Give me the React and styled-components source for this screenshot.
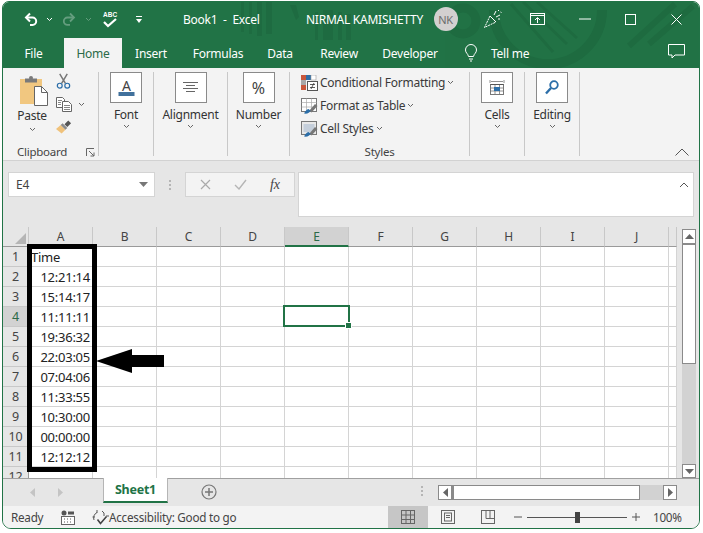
import React from "react";
import styled, { createGlobalStyle } from "styled-components";

const GREEN = "#217346";
const COLUMNS = ["A", "B", "C", "D", "E", "F", "G", "H", "I", "J"];
const TIMES = ["12:21:14", "15:14:17", "11:11:11", "19:36:32", "22:03:05", "07:04:06", "11:33:55", "10:30:00", "00:00:00", "12:12:12"];

const GlobalStyle = createGlobalStyle`
  html, body {
    margin: 0;
    padding: 0;
    background: #fff;
    overflow: hidden;
  }
  * {
    box-sizing: border-box;
  }
`;

const Window = styled.div`
  width: 698px;
  height: 528px;
  margin: 1px 0 0 2px;
  border: 1px solid ${GREEN};
  border-radius: 7px 7px 9px 9px;
  overflow: hidden;
  display: flex;
  flex-direction: column;
  font-family: "Noto Sans", "Open Sans", sans-serif;
  font-size: 12px;
  letter-spacing: -0.25px;
  color: #333;
  background: #f3f3f3;
`;

const Header = styled.div`
  position: relative;
  height: 66px;
  flex: none;
  background: ${GREEN};
  color: #fff;
`;

const Pattern = styled.svg`
  position: absolute;
  left: 0;
  top: 0;
`;

const TitleRow = styled.div`
  position: relative;
  height: 36px;
  padding-bottom: 2px;
  display: flex;
  align-items: center;
`;

const TitleSlot = styled.div`
  position: relative;
  flex: none;
  width: ${(p) => p.$w}px;
  display: flex;
  align-items: center;
  justify-content: center;
  opacity: ${(p) => p.$dim || 1};
`;

const TitleText = styled.div`
  flex: none;
  width: ${(p) => p.$w}px;
  padding-left: ${(p) => p.$pad || 0}px;
  font-size: 12px;
  white-space: pre;
`;

const Avatar = styled.div`
  width: 24px;
  height: 24px;
  border-radius: 50%;
  background: #d3d0d0;
  color: #6d6d6d;
  font-size: 11px;
  display: flex;
  align-items: center;
  justify-content: center;
`;

const TabRow = styled.div`
  position: relative;
  height: 30px;
  display: flex;
  align-items: stretch;
`;

const Tab = styled.div`
  flex: none;
  width: ${(p) => p.$w}px;
  display: flex;
  align-items: center;
  justify-content: center;
  font-size: 12px;
  background: ${(p) => (p.$active ? "#f3f3f3" : "transparent")};
  color: ${(p) => (p.$active ? "#2b6a47" : "#fff")};
`;

const TellMe = styled.div`
  flex: none;
  display: flex;
  align-items: center;
  gap: 13px;
  padding-left: 18px;
  font-size: 12px;
`;

const CommentSlot = styled.div`
  position: absolute;
  right: 14px;
  top: 6px;
`;

const Ribbon = styled.div`
  position: relative;
  height: 93px;
  flex: none;
  display: flex;
  background: #f3f3f3;
  border-bottom: 1px solid #d2d2d2;
  padding-top: 4px;
`;

const Group = styled.div`
  position: relative;
  flex: none;
  width: ${(p) => p.$w}px;
  height: 84px;
  border-right: 1px solid #c8c8c8;
  display: flex;
  flex-direction: column;
  align-items: center;
`;

const Collapsed = styled.div`
  width: 32px;
  height: 31px;
  background: #fff;
  border: 1px solid #8a8a8a;
  display: flex;
  align-items: center;
  justify-content: center;
  font-size: 16px;
  letter-spacing: 0;
  color: #444;
`;

const GroupName = styled.div`
  margin-top: 3px;
  font-size: 12px;
  line-height: 18px;
`;

const Chevron = styled.svg`
  display: block;
  flex: none;
`;

const GroupFoot = styled.div`
  position: absolute;
  left: 0;
  right: 0;
  top: 72px;
  text-align: center;
  font-size: 11.5px;
  line-height: 16px;
  color: #444;
`;

const ClipFoot = styled(GroupFoot)`
  display: flex;
  align-items: center;
  justify-content: space-between;
  padding: 0 3px 0 14px;
`;

const ClipBody = styled.div`
  display: flex;
  width: 100%;
  padding-left: 11px;
`;

const PasteCol = styled.div`
  width: 36px;
  padding-top: 4px;
  display: flex;
  flex-direction: column;
  align-items: center;
  font-size: 12px;
  line-height: 16px;
`;

const PasteLabel = styled.span`
  margin: 2px 0 3px;
`;

const ClipTools = styled.div`
  display: flex;
  flex-direction: column;
  gap: 5px;
  padding-left: 6px;
`;

const ClipTool = styled.div`
  display: flex;
  align-items: center;
  gap: 6px;
  height: 18px;
`;

const StyleList = styled.div`
  display: flex;
  flex-direction: column;
  width: 100%;
  padding: 0 0 0 11px;
  gap: 2px;
`;

const StyleItem = styled.div`
  height: 21px;
  display: flex;
  align-items: center;
  gap: 2px;
  font-size: 12px;
  color: #3a3a3a;
  white-space: nowrap;
`;

const CollapseArrow = styled.svg`
  position: absolute;
  right: 10px;
  bottom: 4px;
`;

const FormulaRow = styled.div`
  height: 66px;
  flex: none;
  background: #e6e6e6;
  display: flex;
  align-items: flex-start;
  padding: 11px 0 0 5px;
`;

const NameBox = styled.div`
  width: 147px;
  height: 25px;
  background: #fff;
  border: 1px solid #d4d4d4;
  display: flex;
  align-items: center;
  justify-content: space-between;
  padding: 0 6px 0 7px;
  font-size: 12px;
  color: #444;
`;

const Grip = styled.div`
  width: 30px;
  height: 25px;
  display: flex;
  align-items: center;
  justify-content: center;
`;

const GripDots = styled.div`
  width: 2px;
  height: ${(p) => p.$h}px;
  background: repeating-linear-gradient(#b5b5b5 0 2px, transparent 2px 4px);
`;

const FxBox = styled.div`
  width: 110px;
  height: 25px;
  background: #f3f3f3;
  border: 1px solid #d4d4d4;
  display: flex;
  align-items: center;
  gap: 23px;
  padding-left: 14px;
`;

const FxLabel = styled.span`
  font-family: "Liberation Serif", serif;
  font-style: italic;
  font-size: 14px;
  color: #444;
`;

const FormulaInput = styled.div`
  width: 396px;
  height: 45px;
  margin-left: 3px;
  background: #fff;
  border: 1px solid #d4d4d4;
  display: flex;
  justify-content: flex-end;
  padding: 9px 4px 0 0;
`;

const Sheet = styled.div`
  position: relative;
  height: 251px;
  flex: none;
  display: flex;
  background: #e6e6e6;
`;

const SheetMain = styled.div`
  width: 674px;
  flex: none;
  height: 100%;
  overflow: hidden;
  background: #fff;
`;

const ColumnHead = styled.div`
  display: grid;
  grid-template-columns: 26px repeat(10, 64px) 8px;
  height: 20px;
  background: #e6e6e6;
`;

const Corner = styled.div`
  position: relative;
  border-right: 1px solid #c8c8c8;
  border-bottom: 1px solid #9a9a9a;
`;

const CornerMark = styled.div`
  position: absolute;
  right: 2px;
  bottom: 2px;
  width: 0;
  height: 0;
  border-left: 11px solid transparent;
  border-bottom: 11px solid #b5b5b5;
`;

const ColHead = styled.div`
  display: flex;
  align-items: center;
  justify-content: center;
  font-size: 12px;
  color: ${(p) => (p.$active ? "#2b6a47" : "#444")};
  background: ${(p) => (p.$active ? "#d2d2d2" : "transparent")};
  border-right: 1px solid #c8c8c8;
  border-bottom: ${(p) => (p.$active ? `2px solid ${GREEN}` : "1px solid #9a9a9a")};
`;

const Rows = styled.div`
  display: grid;
  grid-template-columns: 26px repeat(10, 64px) 8px;
  grid-auto-rows: 20px;
`;

const RowHead = styled.div`
  display: flex;
  align-items: center;
  justify-content: center;
  font-size: 12.5px;
  color: ${(p) => (p.$active ? "#2b6a47" : "#444")};
  background: ${(p) => (p.$active ? "#d2d2d2" : "#e6e6e6")};
  border-right: 1px solid #9a9a9a;
  border-bottom: 1px solid #c8c8c8;
`;

const Cell = styled.div`
  border-right: 1px solid #d4d4d4;
  border-bottom: 1px solid #d4d4d4;
  background: #fff;
  display: flex;
  align-items: center;
  justify-content: ${(p) => (p.$right ? "flex-end" : "flex-start")};
  padding: 0 2px 0 2px;
  font-size: 13px;
  color: #222;
`;

const Selection = styled.div`
  position: absolute;
  left: 280px;
  top: 78px;
  width: 67px;
  height: 22px;
  border: 2px solid ${GREEN};
  &::after {
    content: "";
    position: absolute;
    right: -4px;
    bottom: -4px;
    width: 5px;
    height: 5px;
    background: ${GREEN};
    border: 1px solid #fff;
  }
`;

const Highlight = styled.div`
  position: absolute;
  left: 24px;
  top: 17px;
  width: 70px;
  height: 228px;
  border: 5px solid #000;
`;

const ArrowMark = styled.svg`
  position: absolute;
  left: 93px;
  top: 122px;
`;

const VScroll = styled.div`
  width: 22px;
  flex: none;
  display: flex;
  flex-direction: column;
  padding: 2px 3px 0 5px;
`;

const ScrollBtn = styled.div`
  flex: none;
  width: ${(p) => p.$w}px;
  height: ${(p) => p.$h}px;
  background: #fff;
  border: 1px solid #8a8a8a;
  display: flex;
  align-items: center;
  justify-content: center;
`;

const VThumb = styled.div`
  width: 14px;
  height: 120px;
  flex: none;
  background: #fff;
  border: 1px solid #8a8a8a;
`;

const VTrack = styled.div`
  width: 14px;
  flex: 1;
  background: #d2d2d2;
`;

const TabsBar = styled.div`
  height: 28px;
  flex: none;
  background: #e6e6e6;
  border-top: 1px solid #a0a0a0;
  display: flex;
  align-items: flex-start;
`;

const SheetNav = styled.div`
  width: 100px;
  height: 26px;
  flex: none;
  display: flex;
  align-items: center;
  gap: 23px;
  padding-left: 27px;
`;

const SheetTab = styled.div`
  width: 65px;
  height: 25px;
  margin-top: -1px;
  flex: none;
  background: #fff;
  border-left: 1px solid #b5b5b5;
  border-right: 1px solid #b5b5b5;
  border-bottom: 2px solid ${GREEN};
  color: ${GREEN};
  font-weight: 700;
  font-size: 12.5px;
  display: flex;
  align-items: center;
  justify-content: center;
`;

const AddSheet = styled.svg`
  flex: none;
  margin: 5px 0 0 33px;
`;

const SheetGrip = styled.div`
  flex: none;
  margin: 7px 0 0 204px;
`;

const HScroll = styled.div`
  flex: none;
  width: 239px;
  height: 15px;
  margin: 6px 0 0 15px;
  display: flex;
`;

const HThumb = styled.div`
  width: 188px;
  height: 15px;
  flex: none;
  background: #fff;
  border: 1px solid #8a8a8a;
  border-left-width: 2px;
`;

const HTrack = styled.div`
  flex: 1;
  background: #d2d2d2;
`;

const StatusBar = styled.div`
  flex: 1;
  display: flex;
  align-items: stretch;
  background: #f3f3f3;
  font-size: 11.7px;
  color: #444;
`;

const StatusText = styled.div`
  flex: none;
  width: ${(p) => p.$w}px;
  padding-left: ${(p) => p.$pad || 0}px;
  display: flex;
  align-items: center;
  white-space: nowrap;
`;

const ViewButton = styled.div`
  flex: none;
  width: 40px;
  display: flex;
  align-items: center;
  justify-content: center;
  background: ${(p) => (p.$active ? "#c6c6c6" : "transparent")};
`;

const Zoom = styled.div`
  flex: none;
  display: flex;
  align-items: center;
  width: 145px;
  padding-left: 6px;
  gap: 5px;
`;

const ZoomTrack = styled.div`
  position: relative;
  width: 100px;
  height: 1px;
  background: #555;
`;

const ZoomThumb = styled.div`
  position: absolute;
  left: 48px;
  top: -5px;
  width: 5px;
  height: 11px;
  background: #444;
`;

const Small = ({ dark, size = 7 }) => (
  <Chevron width={size} height={5} viewBox="0 0 7 5">
    <path d="M1 1l2.5 2.5L6 1" fill="none" stroke={dark || "#666"} strokeWidth="1" />
  </Chevron>
);

const TitlePattern = () => (
  <Pattern width="698" height="66" viewBox="0 0 698 66">
    <g fill="#1e6a40" opacity="0.8">
      <path d="M238 0h3v30h-3zM246 0h3v32h-3zM254 0h5v34h-5zM263 0h6v32h-6z" />
      <path d="M287 3h6l3 12-3 3zM312 10h3v28h-3zM320 8h10v30h-10zM335 10h4v28h-4zM343 12h5v26h-5z" />
    </g>
    <g fill="none" stroke="#1e6a40" opacity="0.85">
      <circle cx="460" cy="19" r="13" strokeWidth="9" />
      <path d="M491 0a54 54 0 0 0 108 0" strokeWidth="10" transform="translate(0 8)" />
      <path d="M520 0L564 42M508 2L550 50M534 0L574 36" strokeWidth="3" />
      <path d="M626 44L672 2M646 42L690 4" strokeWidth="6" />
    </g>
  </Pattern>
);

const Undo = () => (
  <svg width="16" height="14" viewBox="0 0 16 14">
    <path d="M6 1.5L2 5.5l4 4" fill="none" stroke="#fff" strokeWidth="2" />
    <path d="M2.5 5.5h6a3.7 3.7 0 0 1 0 7.4H6" fill="none" stroke="#fff" strokeWidth="2" />
  </svg>
);

const Redo = () => (
  <svg width="16" height="14" viewBox="0 0 16 14">
    <path d="M10 1.5l4 4-4 4" fill="none" stroke="#fff" strokeWidth="1.8" />
    <path d="M13.5 5.5h-6a3.7 3.7 0 0 0 0 7.4H10" fill="none" stroke="#fff" strokeWidth="1.8" />
  </svg>
);

const Spelling = () => (
  <svg width="16" height="18" viewBox="0 0 16 18">
    <path d="M2 12l4 4 8-7" fill="none" stroke="#fff" strokeWidth="2.2" />
    <text x="1" y="6.5" fontSize="6.5" fontWeight="700" letterSpacing="0" fill="#fff" fontFamily="Liberation Sans, sans-serif">ABC</text>
  </svg>
);

const Customize = () => (
  <svg width="8" height="9" viewBox="0 0 8 9">
    <path d="M1 1.5h6" stroke="#fff" />
    <path d="M1 4h6L4 8z" fill="#fff" />
  </svg>
);

const Popper = () => (
  <svg width="20" height="20" viewBox="0 0 20 20" fill="none" stroke="#fff" strokeWidth="1">
    <path d="M7 7L1.5 18.5 13 13z" strokeDasharray="2 0.8" />
    <path d="M7 7l6 6" />
    <path d="M11 6l2-4M13 8l4-2M15 1l1 1M17.5 3l1 .5M15 10h2" />
  </svg>
);

const RibbonDisplay = () => (
  <svg width="15" height="12" viewBox="0 0 15 12" fill="none" stroke="#fff">
    <rect x="0.5" y="0.5" width="14" height="11" />
    <path d="M0.5 2.5h14" />
    <path d="M7.5 10V5M5 7l2.5-2.5L10 7" />
  </svg>
);

const Minimize = () => (
  <svg width="12" height="2" viewBox="0 0 12 2"><path d="M0 1h12" stroke="#fff" /></svg>
);

const Maximize = () => (
  <svg width="11" height="11" viewBox="0 0 11 11"><rect x="0.5" y="0.5" width="10" height="10" fill="none" stroke="#fff" /></svg>
);

const CloseX = () => (
  <svg width="11" height="11" viewBox="0 0 11 11"><path d="M0.5 0.5l10 10M10.5 0.5l-10 10" stroke="#fff" /></svg>
);

const Bulb = () => (
  <svg width="14" height="18" viewBox="0 0 14 18" fill="none" stroke="#fff">
    <path d="M4.5 12.5C4 9.5 1.5 9 1.5 6a5.5 5.5 0 0 1 11 0c0 3-2.5 3.5-3 6.5z" />
    <path d="M5 15h4M6 17h2" />
  </svg>
);

const Comment = () => (
  <svg width="17" height="15" viewBox="0 0 17 15" fill="none" stroke="#fff">
    <path d="M0.5 0.5h16v10.5H7l-3 3v-3H0.5z" />
  </svg>
);

const PasteIcon = () => (
  <svg width="32" height="30" viewBox="-4 0 32 30">
    <path d="M0 3h22v25H0z" fill="#f1c780" />
    <rect x="5" y="2.5" width="12" height="4" fill="#7a7a7a" />
    <circle cx="11" cy="2" r="2" fill="#7a7a7a" />
    <path d="M14.5 10.5h7l6 6v13h-13z" fill="#fff" stroke="#666" />
    <path d="M21.5 10.5v6h6" fill="none" stroke="#666" />
  </svg>
);

const Scissors = () => (
  <svg width="15" height="16" viewBox="0 0 16 17" fill="none">
    <path d="M4 1l6 10M12 1L6 11" stroke="#777" strokeWidth="1.6" />
    <circle cx="4" cy="13.5" r="2.6" stroke="#2c6ea8" strokeWidth="1.3" />
    <circle cx="12" cy="13.5" r="2.6" stroke="#2c6ea8" strokeWidth="1.3" />
  </svg>
);

const CopyIcon = () => (
  <svg width="16" height="15" viewBox="0 0 16 15" fill="#fff" stroke="#666">
    <path d="M0.5 0.5h6l2 2v8h-8z" />
    <path d="M6.5 4.5h6l3 3v7h-9z" />
    <path d="M2 3.5h4M2 5.5h3M2 7.5h3M8 8.5h6M8 10.5h6M8 12.5h6" strokeWidth="0.8" />
  </svg>
);

const Launcher = () => (
  <svg width="9" height="9" viewBox="0 0 9 9" fill="none" stroke="#666">
    <path d="M0.5 8V0.5H8" />
    <path d="M3 3l5 5M8 4.5V8H4.500" />
  </svg>
);

const Brush = () => (
  <svg width="16" height="14" viewBox="0 0 17 14">
    <path d="M0 9l5-4 5 5-4 4z" fill="#f0c27b" />
    <path d="M5 5l5 5 2-2-5-5z" fill="#8a8a8a" />
    <path d="M9 4l4-4 3 3-4 4z" fill="#555" />
  </svg>
);

const FontIcon = () => (
  <svg width="17" height="19" viewBox="0 0 17 19">
    <text x="8.5" y="12.5" textAnchor="middle" fontSize="14" fill="#444" fontFamily="Noto Sans, sans-serif">A</text>
    <rect x="0.5" y="14" width="16" height="4" fill="#41719c" />
  </svg>
);

const AlignIcon = () => (
  <svg width="15" height="13" viewBox="0 0 15 13" stroke="#666">
    <path d="M0 1.5h15M3 4.5h9M0 7.5h15M3 10.5h9" />
  </svg>
);

const CellsIcon = () => (
  <svg width="16" height="18" viewBox="0 0 16 18" fill="none" stroke="#777">
    <path d="M1 1v3M15 1v3M2 2.5h12" strokeWidth="0.8" />
    <rect x="1.5" y="5.5" width="13" height="10" fill="#fff" />
    <path d="M1.5 9h13M1.5 12h13M6 5.5v10M10.5 5.5v10" strokeWidth="0.8" />
    <rect x="5" y="8" width="6" height="4" fill="#2c6ea8" stroke="none" />
    <path d="M1.5 5.5h13" stroke="#555" />
  </svg>
);

const Magnifier = () => (
  <svg width="14" height="15" viewBox="0 0 14 15" fill="none">
    <circle cx="9" cy="5" r="3.8" stroke="#2c6ea8" strokeWidth="1.8" />
    <path d="M6 8l-5 5.5" stroke="#2c6ea8" strokeWidth="2.4" />
  </svg>
);

const ConditionalIcon = () => (
  <svg width="17" height="16" viewBox="0 0 17 16">
    <rect x="0" y="0" width="5" height="5" fill="#c9583c" />
    <rect x="5" y="0" width="5" height="5" fill="#2f6ea5" />
    <rect x="0" y="5" width="5" height="5" fill="#a8a8a8" />
    <rect x="0" y="10" width="5" height="5" fill="#c9583c" />
    <rect x="10" y="0" width="5" height="5" fill="#fff" stroke="#999" strokeWidth="0.6" />
    <rect x="6.5" y="6.5" width="10" height="9" fill="#fff" stroke="#555" />
    <path d="M9 9.5h5M9 12.5h5M10 14l3-6" stroke="#333" strokeWidth="0.8" />
  </svg>
);

const TableIcon = ({ fillCells }) => (
  <svg width="17" height="16" viewBox="0 0 17 16">
    <rect x="0.5" y="0.5" width="15" height="13" fill={fillCells ? "#fff" : "#e8e8e8"} stroke="#777" />
    {fillCells ? (
      <path d="M0.5 4.5h15M5.5 0.5v13M10.5 0.5v13M0.5 9h15" stroke="#aaa" strokeWidth="0.7" />
    ) : (
      <rect x="2.5" y="3" width="11" height="8" fill="#c5cfdb" />
    )}
    <path d="M8 13l6-7 2.5 2-6 6.5z" fill="#777" />
    <path d="M3 15.5c3 .5 6-.5 6.5-3l-2-1.5c-2 .5-3 2-4.5 4.5z" fill="#2c6ea8" />
  </svg>
);

const TriangleDown = ({ color = "#777", w = 9, h = 5 }) => (
  <svg width={w} height={h} viewBox="0 0 9 5"><path d="M0 0h9L4.5 5z" fill={color} /></svg>
);

const Caret = ({ dir, color = "#666" }) => {
  const d = {
    up: "M0 5L4.5 0 9 5z",
    down: "M0 0h9L4.5 5z",
    left: "M5 0v9L0 4.5z",
    right: "M0 0v9l5-4.5z",
  }[dir];
  const vertical = dir === "up" || dir === "down";
  return (
    <svg width={vertical ? 9 : 5} height={vertical ? 5 : 9} viewBox={vertical ? "0 0 9 5" : "0 0 5 9"}>
      <path d={d} fill={color} />
    </svg>
  );
};

const MacroIcon = () => (
  <svg width="14" height="15" viewBox="0 0 14 15">
    <circle cx="3" cy="3" r="2.5" fill="#555" />
    <path d="M7 1.5h6v3H7z" fill="#555" />
    <rect x="0.5" y="6.5" width="13" height="8" fill="#fff" stroke="#666" />
    <path d="M3 9h1M6 9h1M9 9h1M3 12h1M6 12h1M9 12h1" stroke="#555" />
  </svg>
);

const AccessIcon = () => (
  <svg width="18" height="17" viewBox="0 0 18 17" fill="none" stroke="#555">
    <path d="M6 3.5A6 6 0 0 0 3 11M11 2l2 2M6 1v3M1.5 8H4M15 7h3M13 7V4" />
    <path d="M6.5 10.5l3 4 6-7" stroke="#444" strokeWidth="1.6" />
  </svg>
);

const NormalView = () => (
  <svg width="14" height="14" viewBox="0 0 14 14" fill="none" stroke="#666">
    <rect x="0.5" y="0.5" width="13" height="13" />
    <path d="M0.5 5h13M0.5 9.5h13M5 0.5v13M9.5 0.5v13" />
  </svg>
);

const LayoutView = () => (
  <svg width="14" height="14" viewBox="0 0 14 14" fill="none" stroke="#666">
    <rect x="0.5" y="0.5" width="13" height="13" />
    <rect x="3.5" y="3" width="7" height="8" />
    <path d="M5 5.5h4M5 7.5h4" />
  </svg>
);

const BreakView = () => (
  <svg width="14" height="14" viewBox="0 0 14 14" fill="none" stroke="#666">
    <rect x="0.5" y="0.5" width="13" height="13" />
    <path d="M5 0.5v8h8.5M9 0.5v8" />
  </svg>
);

const Arrow = () => (
  <ArrowMark width="68" height="24" viewBox="0 0 68 24">
    <path d="M0 12L36 0v6h32v12H36v6z" fill="#000" />
  </ArrowMark>
);

const CollapsedGroup = ({ w, name, children }) => (
  <Group $w={w}>
    <Collapsed>{children}</Collapsed>
    <GroupName>{name}</GroupName>
    <Small />
  </Group>
);

const StyleEntry = ({ icon, label }) => (
  <StyleItem>
    {icon}
    <span>{label}</span>
    <Small />
  </StyleItem>
);

export default function App() {
  const rows = [];
  for (let r = 1; r <= 12; r++) {
    rows.push(
      <React.Fragment key={r}>
        <RowHead $active={r === 4}>{r}</RowHead>
        {COLUMNS.map((c) => {
          let value = "";
          if (c === "A" && r === 1) value = "Time";
          if (c === "A" && r > 1 && r <= 11) value = TIMES[r - 2];
          return <Cell key={c} $right={r > 1}>{value}</Cell>;
        })}
        <Cell />
      </React.Fragment>
    );
  }

  return (
    <>
      <GlobalStyle />
      <Window>
        <Header>
          <TitlePattern />
          <TitleRow>
            <TitleSlot $w={20} />
            <TitleSlot $w={17}><Undo /></TitleSlot>
            <TitleSlot $w={18}><Small dark="#fff" /></TitleSlot>
            <TitleSlot $w={20} $dim={0.3}><Redo /></TitleSlot>
            <TitleSlot $w={20} $dim={0.3}><Small dark="#fff" /></TitleSlot>
            <TitleSlot $w={23}><Spelling /></TitleSlot>
            <TitleSlot $w={36}><Customize /></TitleSlot>
            <TitleText $w={149} $pad={26}>Book1  -  Excel</TitleText>
            <TitleText $w={125}>NIRMAL KAMISHETTY</TitleText>
            <TitleSlot $w={29}><Avatar>NK</Avatar></TitleSlot>
            <TitleSlot $w={65}><Popper /></TitleSlot>
            <TitleSlot $w={25}><RibbonDisplay /></TitleSlot>
            <TitleSlot $w={70}><Minimize /></TitleSlot>
            <TitleSlot $w={20}><Maximize /></TitleSlot>
            <TitleSlot $w={72}><CloseX /></TitleSlot>
          </TitleRow>
          <TabRow>
            <Tab $w={61}>File</Tab>
            <Tab $w={58} $active>Home</Tab>
            <Tab $w={58}>Insert</Tab>
            <Tab $w={76}>Formulas</Tab>
            <Tab $w={48}>Data</Tab>
            <Tab $w={70}>Review</Tab>
            <Tab $w={72}>Developer</Tab>
            <TellMe><Bulb />Tell me</TellMe>
            <CommentSlot><Comment /></CommentSlot>
          </TabRow>
        </Header>

        <Ribbon>
          <Group $w={96}>
            <ClipBody>
              <PasteCol>
                <PasteIcon />
                <PasteLabel>Paste</PasteLabel>
                <Small />
              </PasteCol>
              <ClipTools>
                <ClipTool><Scissors /></ClipTool>
                <ClipTool><CopyIcon /><Small /></ClipTool>
                <ClipTool><Brush /></ClipTool>
              </ClipTools>
            </ClipBody>
            <ClipFoot>
              <span>Clipboard</span>
              <Launcher />
            </ClipFoot>
          </Group>
          <CollapsedGroup w={55} name="Font"><FontIcon /></CollapsedGroup>
          <CollapsedGroup w={74} name="Alignment"><AlignIcon /></CollapsedGroup>
          <CollapsedGroup w={62} name="Number">%</CollapsedGroup>
          <Group $w={180}>
            <StyleList>
              <StyleEntry icon={<ConditionalIcon />} label="Conditional Formatting" />
              <StyleEntry icon={<TableIcon fillCells />} label="Format as Table" />
              <StyleEntry icon={<TableIcon />} label="Cell Styles" />
            </StyleList>
            <GroupFoot>Styles</GroupFoot>
          </Group>
          <CollapsedGroup w={55} name="Cells"><CellsIcon /></CollapsedGroup>
          <CollapsedGroup w={55} name="Editing"><Magnifier /></CollapsedGroup>
          <CollapseArrow width="14" height="8" viewBox="0 0 14 8">
            <path d="M0.5 7.5L7 1l6.5 6.5" fill="none" stroke="#555" />
          </CollapseArrow>
        </Ribbon>

        <FormulaRow>
          <NameBox>
            <span>E4</span>
            <TriangleDown />
          </NameBox>
          <Grip><GripDots $h={10} /></Grip>
          <FxBox>
            <svg width="11" height="11" viewBox="0 0 11 11"><path d="M1 1l9 9M10 1l-9 9" stroke="#aaa" strokeWidth="1.2" /></svg>
            <svg width="13" height="11" viewBox="0 0 13 11"><path d="M1 6l4 4 7-9" fill="none" stroke="#b5b5b5" strokeWidth="1.4" /></svg>
            <FxLabel>fx</FxLabel>
          </FxBox>
          <FormulaInput>
            <Chevron width="10" height="6" viewBox="0 0 10 6">
              <path d="M1 5l4-4 4 4" fill="none" stroke="#555" />
            </Chevron>
          </FormulaInput>
        </FormulaRow>

        <Sheet>
          <SheetMain>
            <ColumnHead>
              <Corner><CornerMark /></Corner>
              {COLUMNS.map((c) => (
                <ColHead key={c} $active={c === "E"}>{c}</ColHead>
              ))}
              <ColHead />
            </ColumnHead>
            <Rows>{rows}</Rows>
          </SheetMain>
          <VScroll>
            <ScrollBtn $w={14} $h={15}><Caret dir="up" /></ScrollBtn>
            <VThumb />
            <VTrack />
            <ScrollBtn $w={14} $h={14}><Caret dir="down" /></ScrollBtn>
          </VScroll>
          <Selection />
          <Highlight />
          <Arrow />
        </Sheet>

        <TabsBar>
          <SheetNav>
            <Caret dir="left" color="#c4c4c4" />
            <Caret dir="right" color="#c4c4c4" />
          </SheetNav>
          <SheetTab>Sheet1</SheetTab>
          <AddSheet width="16" height="16" viewBox="0 0 16 16" fill="none" stroke="#777">
            <circle cx="8" cy="8" r="7" strokeWidth="1.2" />
            <path d="M4 8h8M8 4v8" strokeWidth="1.5" />
          </AddSheet>
          <SheetGrip><GripDots $h={10} /></SheetGrip>
          <HScroll>
            <ScrollBtn $w={14} $h={15}><Caret dir="left" /></ScrollBtn>
            <HThumb />
            <HTrack />
            <ScrollBtn $w={14} $h={15}><Caret dir="right" /></ScrollBtn>
          </HScroll>
        </TabsBar>

        <StatusBar>
          <StatusText $w={58} $pad={8}>Ready</StatusText>
          <StatusText $w={30}><MacroIcon /></StatusText>
          <StatusText $w={297}><AccessIcon />Accessibility: Good to go</StatusText>
          <ViewButton $active><NormalView /></ViewButton>
          <ViewButton><LayoutView /></ViewButton>
          <ViewButton><BreakView /></ViewButton>
          <Zoom>
            <svg width="8" height="2" viewBox="0 0 8 2"><path d="M0 1h8" stroke="#555" /></svg>
            <ZoomTrack><ZoomThumb /></ZoomTrack>
            <svg width="8" height="8" viewBox="0 0 8 8"><path d="M0 4h8M4 0v8" stroke="#555" /></svg>
          </Zoom>
          <StatusText $w={40}>100%</StatusText>
        </StatusBar>
      </Window>
    </>
  );
}
